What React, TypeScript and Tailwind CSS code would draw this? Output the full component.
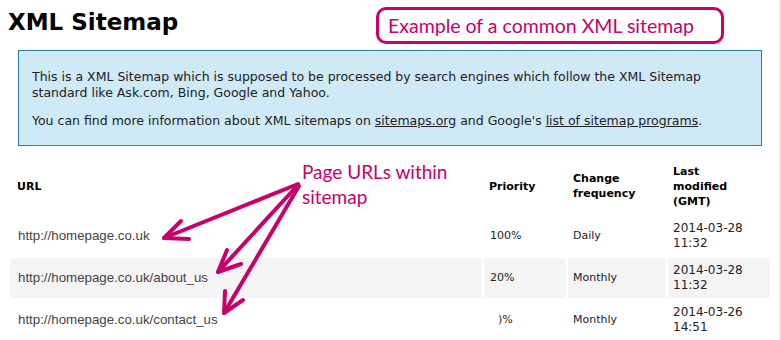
import React from 'react';

type Entry = {
  url: string;
  priority: string;
  freq: string;
  date: string;
  time: string;
};

const entries: Entry[] = [
  { url: 'http://homepage.co.uk', priority: '100%', freq: 'Daily', date: '2014-03-28', time: '11:32' },
  { url: 'http://homepage.co.uk/about_us', priority: '20%', freq: 'Monthly', date: '2014-03-28', time: '11:32' },
  { url: 'http://homepage.co.uk/contact_us', priority: ')%', freq: 'Monthly', date: '2014-03-26', time: '14:51' },
];

const MAGENTA = '#c8006a';

// callout arrows pointing from the label down to each URL
function Arrows() {
  const arrows = [
    { from: [298, 184], to: [164, 238], barbs: [[181, 221], [189, 239]] },
    { from: [297, 186], to: [218, 272], barbs: [[227, 250], [241, 264]] },
    { from: [299, 186], to: [224, 313], barbs: [[225, 291], [243, 300]] },
  ];
  return (
    <svg className="pointer-events-none absolute inset-0" width={781} height={340} viewBox="0 0 781 340">
      {arrows.map((a, i) => (
        <g key={i} stroke={MAGENTA} strokeWidth={4} strokeLinecap="round" strokeLinejoin="round" fill="none">
          <line x1={a.from[0]} y1={a.from[1]} x2={a.to[0]} y2={a.to[1]} />
          <polyline points={`${a.barbs[0][0]},${a.barbs[0][1]} ${a.to[0]},${a.to[1]} ${a.barbs[1][0]},${a.barbs[1][1]}`} />
        </g>
      ))}
    </svg>
  );
}

export default function App() {
  return (
    <div className="relative flex h-[340px] w-[781px] overflow-hidden bg-white">
      <div className="w-[779px] font-['DejaVu_Sans',sans-serif] text-[#222]">
        <div className="flex items-start pt-[7px]">
          <h1 className="pl-[8px] pt-[1px] text-[23px] font-bold leading-[28px] text-black">XML Sitemap</h1>
          <div className="ml-auto mr-[55px] flex h-[37px] w-[348px] items-center rounded-[10px] border-[3px] border-[#c8006a] pl-[9px] font-['Lato',sans-serif] text-[19.5px] text-[#c8006a]">
            Example of a common XML sitemap
          </div>
        </div>

        <div className="ml-[18px] mt-[6px] w-[744px] border border-[#2b7cb3] bg-[#cfe9f6] pb-[16px] pl-[13px] pr-[12px] pt-[18px] text-[12.5px] leading-[16px]">
          <p>
            This is a XML Sitemap which is supposed to be processed by search engines which follow the XML Sitemap
            standard like Ask.com, Bing, Google and Yahoo.
          </p>
          <p className="mt-[12px]">
            You can find more information about XML sitemaps on <span className="underline">sitemaps.org</span> and
            Google's <span className="underline">list of sitemap programs</span>.
          </p>
        </div>

        <table className="ml-[8px] mt-[10px] border-separate border-spacing-[2px] text-[11px]">
          <thead>
            <tr className="h-[56px] text-left align-middle font-bold leading-[15px] text-black">
              <th className="w-[472px] pl-[7px]">URL</th>
              <th className="w-[82px] pl-[5px]">Priority</th>
              <th className="w-[98px] pl-[5px]">
                Change
                <br />
                frequency
              </th>
              <th className="w-[102px] pl-[5px]">
                Last
                <br />
                modified
                <br />
                (GMT)
              </th>
            </tr>
          </thead>
          <tbody>
            {entries.map((e, i) => (
              <tr key={e.url} className={`h-[40px] align-middle ${i % 2 === 1 ? 'bg-[#f4f4f4]' : ''}`}>
                <td className="pl-[8px] font-['Liberation_Sans',sans-serif] text-[13.3px] text-[#444]">{e.url}</td>
                <td className={i === 2 ? 'pl-[14px]' : 'pl-[6px]'}>{e.priority}</td>
                <td className="pl-[5px]">{e.freq}</td>
                <td className="pl-[5px] text-[12px] leading-[15px]">
                  {e.date}
                  <br />
                  {e.time}
                </td>
              </tr>
            ))}
          </tbody>
        </table>
      </div>
      <div className="w-[2px] bg-[#e6e6e6]" />

      <Arrows />
      <div className="pointer-events-none absolute left-[302px] top-[159px] font-['Lato',sans-serif] text-[19px] leading-[25px] text-[#c8006a]">
        Page URLs within
        <br />
        sitemap
      </div>
    </div>
  );
}
